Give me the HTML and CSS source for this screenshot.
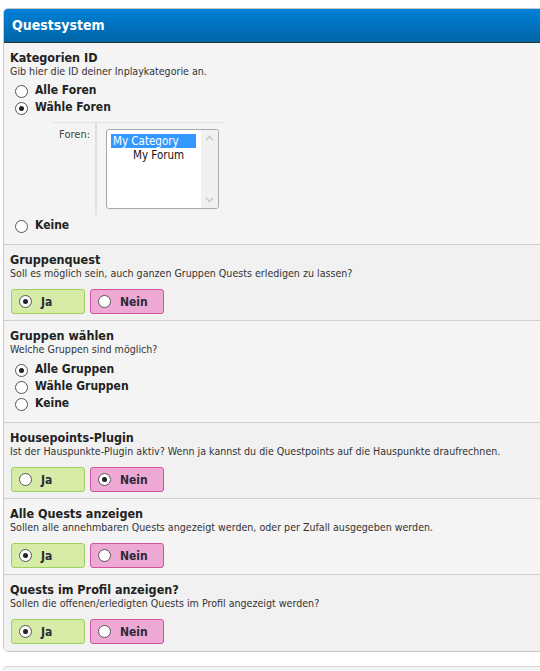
FILE: index.html
```html
<!DOCTYPE html>
<html>
<head>
<meta charset="utf-8">
<link rel="stylesheet" href="styles.css">
</head>
<body>
<div class="box">
  <div class="head">Questsystem</div>

  <div class="row odd r1">
    <div class="title">Kategorien ID</div>
    <div class="desc">Gib hier die ID deiner Inplaykategorie an.</div>
    <div class="radios first">
      <label class="opt"><span class="radio"></span>Alle Foren</label>
      <label class="opt"><span class="radio on"></span>Wähle Foren</label>
    </div>
    <div class="sub">
      <div class="sublabel">Foren:</div>
      <div class="subcell">
        <div class="select">
          <div class="options">
            <div class="option sel">My Category</div>
            <div class="option child">My Forum</div>
          </div>
          <div class="scroll">
            <svg class="arr" width="9" height="6" viewBox="0 0 9 6"><path d="M1 5 L4.5 1.5 L8 5" fill="none" stroke="#c4c4c4" stroke-width="1.4"/></svg>
            <svg class="arr" width="9" height="6" viewBox="0 0 9 6"><path d="M1 1 L4.5 4.5 L8 1" fill="none" stroke="#c4c4c4" stroke-width="1.4"/></svg>
          </div>
        </div>
      </div>
    </div>
    <div class="radios last-radios">
      <label class="opt"><span class="radio"></span>Keine</label>
    </div>
  </div>

  <div class="row even">
    <div class="title">Gruppenquest</div>
    <div class="desc">Soll es möglich sein, auch ganzen Gruppen Quests erledigen zu lassen?</div>
    <div class="yesno">
      <label class="btn yes"><span class="radio on"></span>Ja</label>
      <label class="btn no"><span class="radio"></span>Nein</label>
    </div>
  </div>

  <div class="row odd r3">
    <div class="title">Gruppen wählen</div>
    <div class="desc">Welche Gruppen sind möglich?</div>
    <div class="radios">
      <label class="opt"><span class="radio on"></span>Alle Gruppen</label>
      <label class="opt"><span class="radio"></span>Wähle Gruppen</label>
      <label class="opt"><span class="radio"></span>Keine</label>
    </div>
  </div>

  <div class="row even">
    <div class="title">Housepoints-Plugin</div>
    <div class="desc">Ist der Hauspunkte-Plugin aktiv? Wenn ja kannst du die Questpoints auf die Hauspunkte draufrechnen.</div>
    <div class="yesno">
      <label class="btn yes"><span class="radio"></span>Ja</label>
      <label class="btn no"><span class="radio on"></span>Nein</label>
    </div>
  </div>

  <div class="row odd">
    <div class="title">Alle Quests anzeigen</div>
    <div class="desc">Sollen alle annehmbaren Quests angezeigt werden, oder per Zufall ausgegeben werden.</div>
    <div class="yesno">
      <label class="btn yes"><span class="radio on"></span>Ja</label>
      <label class="btn no"><span class="radio"></span>Nein</label>
    </div>
  </div>

  <div class="row even last">
    <div class="title">Quests im Profil anzeigen?</div>
    <div class="desc">Sollen die offenen/erledigten Quests im Profil angezeigt werden?</div>
    <div class="yesno">
      <label class="btn yes"><span class="radio on"></span>Ja</label>
      <label class="btn no"><span class="radio"></span>Nein</label>
    </div>
  </div>
</div>
<div class="box next"></div>
</body>
</html>
```

FILE: styles.css
```css
html, body {
  margin: 0;
  padding: 0;
  background: #fff;
  overflow: hidden;
  height: 671px;
}
body {
  font-family: "DejaVu Sans Condensed", "DejaVu Sans", sans-serif;
  color: #222;
}
.box {
  margin: 8px 0 0 3px;
  width: 560px;
  border: 1px solid #c8c8c8;
  border-radius: 5px;
  overflow: hidden;
}
.box.next {
  margin-top: 14px;
  height: 3px;
  background: #f4f4f4;
  border-color: #d8d8d8;
  border-bottom: none;
  border-radius: 5px 5px 0 0;
}
.head {
  height: 34px;
  box-sizing: border-box;
  background: linear-gradient(#0081d8, #0064a6);
  border-bottom: 1px solid #1d3a2c;
  color: #fff;
  font-weight: bold;
  font-size: 14px;
  line-height: 33px;
  padding-left: 8px;
}
.row {
  border-bottom: 1px solid #cfcfcf;
  padding: 7px 6px 6px 6px;
}
.row.r1 { padding-bottom: 11px; }
.row.last { border-bottom: none; padding-bottom: 7px; }
.odd { background: #f4f4f4; }
.even { background: #f1f1f1; }
.title {
  font-weight: bold;
  font-size: 12.5px;
  line-height: 15px;
  color: #222;
}
.desc {
  font-size: 10.6px;
  line-height: 13px;
  color: #333;
}
.radios {
  display: flex;
  flex-direction: column;
  padding-left: 5px;
}
.radios.first { margin-top: 3px; }
.radios.last-radios { margin-top: 1px; }
.r3 .radios { margin-top: 4px; padding-bottom: 5px; }
.opt {
  display: flex;
  align-items: center;
  height: 17px;
  font-weight: bold;
  font-size: 12px;
  color: #222;
}
.radio {
  width: 11px;
  height: 11px;
  border: 1px solid #555;
  border-radius: 50%;
  background: #fff;
  box-sizing: content-box;
  margin-right: 7px;
  position: relative;
  flex: none;
}
.opt .radio { margin-top: 3px; }
.radio.on::after {
  content: "";
  position: absolute;
  left: 3px;
  top: 3px;
  width: 5px;
  height: 5px;
  border-radius: 50%;
  background: #222;
}
.sub {
  display: flex;
  margin: 7px 0 0 42px;
  width: 173px;
  border-top: 1px solid #e4e4e4;
  height: 92px;
}
.sublabel {
  width: 38px;
  text-align: right;
  font-size: 11px;
  color: #444;
  padding-top: 5px;
  padding-right: 5px;
  border-right: 2px solid #e0e0e0;
}
.subcell {
  padding: 6px 0 0 9px;
}
.select {
  width: 111px;
  height: 78px;
  border: 1px solid #a9a9a9;
  border-radius: 3px;
  background: #fff;
  display: flex;
  overflow: hidden;
}
.options {
  flex: 1;
  padding: 4px 0 0 4px;
  font-size: 11.5px;
  line-height: 14px;
}
.option { white-space: nowrap; color: #111; }
.option.sel { background: #3399ff; color: #fff; width: 83px; padding-left: 2px; }
.option.child { padding-left: 22px; }
.scroll {
  width: 17px;
  background: #f0f0f0;
  display: flex;
  flex-direction: column;
  justify-content: space-between;
  align-items: center;
  padding: 5px 0 5px;
}
.arr { display: block; }
.yesno {
  display: flex;
  gap: 5px;
  margin-top: 9px;
  padding-left: 1px;
}
.btn {
  width: 74px;
  height: 25px;
  box-sizing: border-box;
  border-radius: 3px;
  display: flex;
  align-items: center;
  padding-left: 7px;
  font-weight: bold;
  font-size: 12px;
  color: #2a2a3a;
}
.btn .radio { margin-right: 9px; }
.yes { background: #d6eba6; border: 1px solid #9fcf5c; }
.no { background: #eea8d4; border: 1px solid #d2529c; }
```
